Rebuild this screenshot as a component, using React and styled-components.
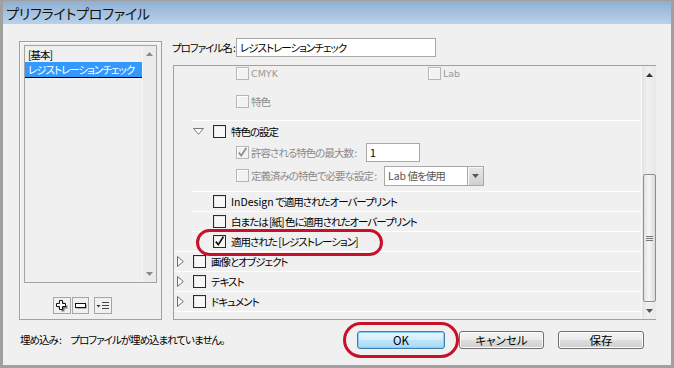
import styled, { createGlobalStyle } from 'styled-components';

const GlobalStyle = createGlobalStyle`
  html, body { margin: 0; padding: 0; background: #fff; }
  body {
    font-family: "Noto Sans CJK JP", "Liberation Sans", sans-serif;
    font-size: 10.5px;
    color: #000;
  }
  * { box-sizing: border-box; }
`;

const Window = styled.div`
  width: 674px;
  height: 368px;
  border: 3px solid #a0a0a0;
  border-top-width: 1px;
  background: #f0f0f0;
  display: flex;
  flex-direction: column;
  font-feature-settings: "palt";
  letter-spacing: -1px;
`;

const TitleBar = styled.div`
  height: 23px;
  flex-shrink: 0;
  background: linear-gradient(#8fafd1, #b9d2ec);
  padding-left: 3px;
  display: flex;
  align-items: center;
  font-size: 14px;
  letter-spacing: -0.2px;
  color: #111;
`;

const Body = styled.div`
  flex: 1;
  display: flex;
  flex-direction: column;
  padding: 14px 15px 0 16px;
`;

const Main = styled.div`
  display: flex;
  height: 282px;
  gap: 10px;
`;

const LeftPanel = styled.div`
  width: 143px;
  height: 279px;
  margin-top: 3px;
  border: 1px solid #a0a0a0;
  box-shadow: inset 1px 1px 0 #fafafa;
  padding: 3px 4px 0 4px;
  display: flex;
  flex-direction: column;
`;

const ListBox = styled.div`
  height: 238px;
  border: 1px solid #a4a4a4;
  display: flex;
`;

const ListItems = styled.div`
  flex: 1;
  padding-top: 1px;
`;

const ListItem = styled.div`
  height: ${p => (p.$selected ? 16 : 15)}px;
  line-height: 15px;
  padding-left: 3px;
  background: ${p => (p.$selected ? '#3399ff' : 'transparent')};
  color: ${p => (p.$selected ? '#fff' : '#000')};
  border-bottom: ${p => (p.$selected ? '1px solid #000' : 'none')};
  white-space: nowrap;
`;

const ListScroll = styled.div`
  width: 14px;
  background: #ebebeb;
  border-left: 1px solid #f6f6f6;
  display: flex;
  flex-direction: column;
  justify-content: space-between;
  align-items: center;
  padding: 6px 0 6px;
`;

const ListButtons = styled.div`
  display: flex;
  margin-top: 14px;
  padding-left: 29px;
`;

const ToolButton = styled.div`
  width: ${p => p.$w || 18}px;
  height: 17px;
  border: 1px solid #a6a6a6;
  background: #f0f0f0;
  margin-left: ${p => p.$ml || 0}px;
  display: flex;
  align-items: center;
  justify-content: center;
`;

const RightCol = styled.div`
  flex: 1;
  display: flex;
  flex-direction: column;
`;

const NameRow = styled.div`
  display: flex;
  align-items: center;
  height: 19px;
`;

const NameLabel = styled.span`
  width: 64px;
  white-space: nowrap;
`;

const TextField = styled.div`
  width: ${p => p.$w}px;
  height: ${p => p.$h || 19}px;
  flex-shrink: 0;
  border: 1px solid #a8a8a8;
  background: #fff;
  padding-left: 3px;
  line-height: ${p => (p.$h || 19) - 2}px;
  color: ${p => p.$color || '#000'};
  white-space: nowrap;
`;

const Panel = styled.div`
  margin-top: 8px;
  margin-left: 1px;
  height: 255px;
  border: 1px solid #a0a0a0;
  border-right: none;
  display: flex;
`;

const Content = styled.div`
  flex: 1;
  overflow: hidden;
`;

const lineBg = {
  full: 'linear-gradient(#fff, #fff) no-repeat 0 100% / 100% 1px',
  indent: 'linear-gradient(#fff, #fff) no-repeat 18px 100% / calc(100% - 18px) 1px',
  none: 'none',
};

const Row = styled.div`
  position: relative;
  display: flex;
  align-items: center;
  height: ${p => p.$h || 20}px;
  padding: ${p => p.$top || 0}px 0 1px ${p => p.$pad || 0}px;
  background: ${p => lineBg[p.$line || 'none']};
  white-space: nowrap;
`;

const Block = styled.div`
  height: ${p => p.$h}px;
  padding-bottom: 1px;
  background: ${p => lineBg[p.$line || 'none']};
`;

const SwatchGrid = styled.div`
  display: grid;
  grid-template-columns: 192px auto;
  grid-auto-rows: 13px;
  row-gap: 15px;
  padding: 1px 0 0 62px;
`;

const Twisty = styled.span`
  width: ${p => p.$w}px;
  display: flex;
  align-items: center;
  flex-shrink: 0;
`;

const Label = styled.span`
  margin-left: ${p => p.$ml ?? 5}px;
  color: ${p => (p.$disabled ? '#8c8c8c' : '#000')};
  width: ${p => (p.$w ? `${p.$w}px` : 'auto')};
  flex-shrink: 0;
  white-space: nowrap;
`;

const Latin = styled.span`
  letter-spacing: 0;
`;

const LatinLabel = styled.span`
  margin-left: 2px;
  font-family: "DejaVu Sans", sans-serif;
  font-size: 9.5px;
  letter-spacing: 0;
  color: #9a9a9a;
`;

const Cell = styled.div`
  display: flex;
  align-items: center;
`;

const Box = styled.span`
  width: 13px;
  height: 13px;
  flex-shrink: 0;
  border: 1px solid ${p => (p.$disabled ? '#b6b6b6' : '#2a2a2a')};
  background: ${p => (p.$disabled ? '#f2f2f2' : '#f8f8f8')};
  box-shadow: inset 1px 1px 0 ${p => (p.$disabled ? '#fff' : '#e4e4e4')};
  display: flex;
  align-items: center;
  justify-content: center;
`;

const Select = styled.div`
  width: 100px;
  height: 20px;
  flex-shrink: 0;
  border: 1px solid #a8a8a8;
  background: #fff;
  display: flex;
  color: #555;
`;

const SelectText = styled.span`
  flex: 1;
  padding-left: 3px;
  line-height: 18px;
`;

const SelectButton = styled.span`
  width: 16px;
  border-left: 1px solid #a8a8a8;
  background: linear-gradient(#e8e8e8, #cfcfcf);
  box-shadow: inset 1px 1px 0 #fafafa;
  display: flex;
  align-items: center;
  justify-content: center;
`;

const Annotation = styled.span`
  position: absolute;
  left: ${p => p.$l}px;
  top: ${p => p.$t}px;
  width: ${p => p.$w}px;
  height: ${p => p.$h}px;
  border: 3px solid #c8102a;
  border-radius: ${p => p.$h / 2}px;
  pointer-events: none;
`;

const ScrollBar = styled.div`
  width: 15px;
  background: linear-gradient(90deg, #e4e4e4, #f0f0f0 40%, #e8e8e8);
  border-left: 1px solid #f8f8f8;
  display: flex;
  flex-direction: column;
`;

const Arrow = styled.div`
  height: 17px;
  display: flex;
  align-items: center;
  justify-content: center;
`;

const Track = styled.div`
  flex: 1;
  display: flex;
  flex-direction: column;
  justify-content: flex-end;
  align-items: center;
`;

const Thumb = styled.div`
  width: 13px;
  height: 128px;
  border: 1px solid #8e8e8e;
  border-radius: 2px;
  background: linear-gradient(90deg, #e2e2e2, #f6f6f6 45%, #dadada);
  display: flex;
  align-items: center;
  justify-content: center;
`;

const Footer = styled.div`
  flex: 1;
  display: flex;
  align-items: center;
  padding: 0 12px 6px 1px;
`;

const FooterText = styled.span`
  white-space: nowrap;
`;

const Buttons = styled.div`
  margin-left: auto;
  display: flex;
  gap: 14px;
`;

const ButtonWrap = styled.div`
  position: relative;
`;

const Button = styled.div`
  width: ${p => p.$w}px;
  height: 18px;
  border: 1px solid ${p => (p.$primary ? '#3c7fb1' : '#707070')};
  border-radius: 3px;
  background: ${p =>
    p.$primary
      ? 'linear-gradient(#e6f5fd 0%, #d4eefb 50%, #bde5fa 51%, #a7d9f5 100%)'
      : 'linear-gradient(#f2f2f2 0%, #ebebeb 50%, #dddddd 51%, #cfcfcf 100%)'};
  box-shadow: inset 0 0 0 1px ${p => (p.$primary ? '#8ecbf0' : '#fcfcfc')};
  display: flex;
  align-items: center;
  justify-content: center;
  font-size: 11.5px;
  letter-spacing: 0;
`;

const UpTri = ({ color = '#333' }) => (
  <svg width="7" height="4" viewBox="0 0 7 4"><path d="M3.5 0 L7 4 H0 Z" fill={color} /></svg>
);

const DownTri = ({ color = '#333' }) => (
  <svg width="7" height="4" viewBox="0 0 7 4"><path d="M0 0 H7 L3.5 4 Z" fill={color} /></svg>
);

const OpenTwisty = () => (
  <svg width="11" height="7" viewBox="0 0 11 7">
    <path d="M0.5 0.5 H10.5 L5.5 6.3 Z" fill="#fafafa" stroke="#7c7c7c" strokeWidth="1" />
  </svg>
);

const ClosedTwisty = () => (
  <svg width="7" height="11" viewBox="0 0 7 11">
    <path d="M0.5 0.5 L6.3 5.5 L0.5 10.5 Z" fill="#fafafa" stroke="#6c6c6c" strokeWidth="1" />
  </svg>
);

const Check = ({ checked, disabled }) => (
  <Box $disabled={disabled}>
    {checked && (
      <svg width="11" height="11" viewBox="0 0 11 11">
        <path d="M1.8 5.6 L4.3 8.6 L9.4 0.8" fill="none" stroke={disabled ? '#8a8a8a' : '#111'} strokeWidth="1.7" />
      </svg>
    )}
  </Box>
);

const PlusIcon = () => (
  <svg width="14" height="14" viewBox="0 0 14 14">
    <path d="M5.5 2.5h3v3h3v3h-3v3h-3v-3h-3v-3h3z" fill="#777" transform="translate(1 1)" />
    <path d="M4.5 1.5h3v3h3v3h-3v3h-3v-3h-3v-3h3z" fill="#fff" stroke="#111" strokeWidth="1" />
  </svg>
);

const MinusIcon = () => (
  <svg width="14" height="8" viewBox="0 0 14 8">
    <rect x="2.5" y="2.5" width="10" height="4" fill="#777" />
    <rect x="1.5" y="1.5" width="10" height="4" fill="#fff" stroke="#111" strokeWidth="1" />
  </svg>
);

const MenuIcon = () => (
  <svg width="14" height="10" viewBox="0 0 14 10">
    <path d="M0.5 4 H4.5 L2.5 6.5 Z" fill="#333" />
    <path d="M6 1.5 H13 M6 4.5 H13 M6 7.5 H13" stroke="#444" strokeWidth="1" />
  </svg>
);

const Grip = () => (
  <svg width="7" height="7" viewBox="0 0 7 7">
    <path d="M0 1.5 H7 M0 3.5 H7 M0 5.5 H7" stroke="#777" strokeWidth="1" />
  </svg>
);

const App = () => (
  <>
    <GlobalStyle />
    <Window>
      <TitleBar>プリフライトプロファイル</TitleBar>
      <Body>
        <Main>
          <LeftPanel>
            <ListBox>
              <ListItems>
                <ListItem>[基本]</ListItem>
                <ListItem $selected>レジストレーションチェック</ListItem>
              </ListItems>
              <ListScroll>
                <UpTri color="#8a8a8a" />
                <DownTri color="#8a8a8a" />
              </ListScroll>
            </ListBox>
            <ListButtons>
              <ToolButton><PlusIcon /></ToolButton>
              <ToolButton $w={17} $ml={1}><MinusIcon /></ToolButton>
              <ToolButton $ml={5}><MenuIcon /></ToolButton>
            </ListButtons>
          </LeftPanel>

          <RightCol>
            <NameRow>
              <NameLabel>プロファイル名 :</NameLabel>
              <TextField $w={200}>レジストレーションチェック</TextField>
            </NameRow>

            <Panel>
              <Content>
                <Block $h={55} $line="indent">
                  <SwatchGrid>
                    <Cell><Check disabled /><LatinLabel>CMYK</LatinLabel></Cell>
                    <Cell><Check disabled /><LatinLabel>Lab</LatinLabel></Cell>
                    <Cell><Check disabled /><Label $ml={2} $disabled>特色</Label></Cell>
                  </SwatchGrid>
                </Block>

                <Block $h={71} $line="indent">
                  <Row $h={22} $pad={19}>
                    <Twisty $w={20}><OpenTwisty /></Twisty>
                    <Check />
                    <Label>特色の設定</Label>
                  </Row>
                  <Row $h={19} $pad={62}>
                    <Check checked disabled />
                    <Label $ml={2} $w={115} $disabled>許容される特色の最大数 :</Label>
                    <TextField $w={54} $h={19}>1</TextField>
                  </Row>
                  <Row $h={24} $top={4} $pad={62}>
                    <Check disabled />
                    <Label $ml={2} $w={133} $disabled>定義済みの特色で必要な設定 :</Label>
                    <Select>
                      <SelectText><Latin>Lab</Latin> 値を使用</SelectText>
                      <SelectButton><DownTri color="#555" /></SelectButton>
                    </Select>
                  </Row>
                </Block>

                <Row $pad={39} $line="indent">
                  <Check />
                  <Label><Latin>InDesign</Latin> で適用されたオーバープリント</Label>
                </Row>
                <Row $pad={39} $line="indent">
                  <Check />
                  <Label>白または [紙] 色に適用されたオーバープリント</Label>
                </Row>
                <Row $pad={39} $line="full">
                  <Check checked />
                  <Label>適用された [レジストレーション]</Label>
                  <Annotation $l={22} $t={-3} $w={187} $h={27} />
                </Row>

                <Row $pad={3} $line="full">
                  <Twisty $w={16}><ClosedTwisty /></Twisty>
                  <Check />
                  <Label>画像とオブジェクト</Label>
                </Row>
                <Row $pad={3} $line="full">
                  <Twisty $w={16}><ClosedTwisty /></Twisty>
                  <Check />
                  <Label>テキスト</Label>
                </Row>
                <Row $pad={3} $line="full">
                  <Twisty $w={16}><ClosedTwisty /></Twisty>
                  <Check />
                  <Label>ドキュメント</Label>
                </Row>
              </Content>

              <ScrollBar>
                <Arrow><UpTri /></Arrow>
                <Track>
                  <Thumb><Grip /></Thumb>
                </Track>
                <Arrow><DownTri color="#555" /></Arrow>
              </ScrollBar>
            </Panel>
          </RightCol>
        </Main>

        <Footer>
          <FooterText>埋め込み :　プロファイルが埋め込まれていません。</FooterText>
          <Buttons>
            <ButtonWrap>
              <Button $w={88} $primary>OK</Button>
              <Annotation $l={-14} $t={-9} $w={116} $h={36} />
            </ButtonWrap>
            <Button $w={85}>キャンセル</Button>
            <Button $w={86}>保存</Button>
          </Buttons>
        </Footer>
      </Body>
    </Window>
  </>
);

export default App;
